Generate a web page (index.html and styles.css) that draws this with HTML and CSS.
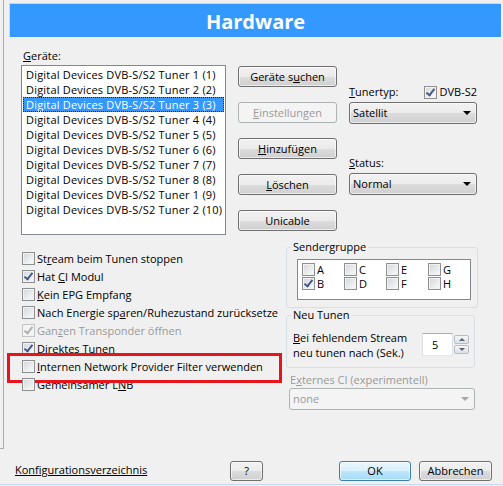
FILE: index.html
```html
<!DOCTYPE html>
<html lang="de">
<head>
  <meta charset="UTF-8" />
  <title>Hardware</title>
  <link rel="stylesheet" href="styles.css">
</head>
<body>
  <div class="dialog">
    <header class="title">Hardware</header>

    <div class="top">
      <div class="devices">
        <div class="label"><u>G</u>eräte:</div>
        <ul class="list">
          <li>Digital Devices DVB-S/S2 Tuner 1 (1)</li>
          <li>Digital Devices DVB-S/S2 Tuner 2 (2)</li>
          <li class="selected">Digital Devices DVB-S/S2 Tuner 3 (3)</li>
          <li>Digital Devices DVB-S/S2 Tuner 4 (4)</li>
          <li>Digital Devices DVB-S/S2 Tuner 5 (5)</li>
          <li>Digital Devices DVB-S/S2 Tuner 6 (6)</li>
          <li>Digital Devices DVB-S/S2 Tuner 7 (7)</li>
          <li>Digital Devices DVB-S/S2 Tuner 8 (8)</li>
          <li>Digital Devices DVB-S/S2 Tuner 1 (9)</li>
          <li>Digital Devices DVB-S/S2 Tuner 2 (10)</li>
        </ul>
      </div>

      <div class="actions">
        <button class="btn">Geräte s<u>u</u>chen</button>
        <button class="btn" disabled><u>E</u>instellungen</button>
        <button class="btn"><u>H</u>inzufügen</button>
        <button class="btn"><u>L</u>öschen</button>
        <button class="btn">Unicable</button>
      </div>

      <div class="tuner">
        <div class="tuner-head">
          <span><u>T</u>unertyp:</span>
          <span class="check"><span class="cb on"></span><span>DVB-S2</span></span>
        </div>
        <div class="combo">Satellit</div>
        <div class="field-label status"><u>S</u>tatus:</div>
        <div class="combo">Normal</div>
      </div>
    </div>

    <div class="bottom">
      <ul class="options">
        <li><span class="cb"></span><span>St<u>r</u>eam beim Tunen stoppen</span></li>
        <li><span class="cb on"></span><span>Hat <u>C</u>I Modul</span></li>
        <li><span class="cb"></span><span><u>K</u>ein EPG Empfang</span></li>
        <li><span class="cb"></span><span>Nach Energie sp<u>a</u>ren/Ruhezustand zurücksetze</span></li>
        <li class="off"><span class="cb on"></span><span>Gan<u>z</u>en Transponder öffnen</span></li>
        <li><span class="cb on"></span><span>Direktes Tunen</span></li>
        <li class="marked"><span class="cb"></span><span><u>I</u>nternen Network Provider Filter verwenden</span></li>
        <li><span class="cb"></span><span>Gemeinsamer L<u>N</u>B</span></li>
      </ul>

      <div class="groups">
        <fieldset class="group sender">
          <legend>Sendergruppe</legend>
          <div class="letters">
            <span class="check"><span class="cb"></span><span>A</span></span>
            <span class="check"><span class="cb"></span><span>C</span></span>
            <span class="check"><span class="cb"></span><span>E</span></span>
            <span class="check"><span class="cb"></span><span>G</span></span>
            <span class="check"><span class="cb on"></span><span>B</span></span>
            <span class="check"><span class="cb"></span><span>D</span></span>
            <span class="check"><span class="cb"></span><span>F</span></span>
            <span class="check"><span class="cb"></span><span>H</span></span>
          </div>
        </fieldset>

        <fieldset class="group retune">
          <legend>Neu Tunen</legend>
          <div class="retune-row">
            <p><u>B</u>ei fehlendem Stream<br>neu tunen nach (Sek.)</p>
            <div class="spin">
              <div class="spin-value">5</div>
              <div class="spin-btns">
                <span class="up"></span>
                <span class="down"></span>
              </div>
            </div>
          </div>
        </fieldset>

        <div class="field-label ext">E<u>x</u>ternes CI (experimentell)</div>
        <div class="combo disabled">none</div>
      </div>
    </div>

    <footer class="footer">
      <a class="link">Konfigurationsverzeichnis</a>
      <button class="btn help">?</button>
      <button class="btn default">OK</button>
      <button class="btn cancel">Abbrechen</button>
    </footer>
  </div>
</body>
</html>
```

FILE: styles.css
```css
* {
  margin: 0; padding: 0; box-sizing: border-box;
}

html, body {
  width: 503px;
  height: 486px;
  overflow: hidden;
  background: #f0f0f0;
  color: #000;
  font-family: "Open Sans", "Noto Sans", sans-serif;
  font-size: 11px;
}

/* rand des fensters dahinter */
body::before {
  content: "";
  position: absolute;
  left: 0; top: 0;
  width: 3px;
  height: 448px;
  border-right: 1px solid #adadad;
  border-bottom: 1px solid #adadad;
}

.dialog {
  height: 485px;
  padding: 3px 1px 3px 9px;
  display: flex;
  flex-direction: column;
  border-bottom: 1px solid #c9d9e8;
}

.title {
  height: 35px;
  background: #3399ff;
  border: 1px solid;
  border-color: #d4d4d4 #fff #fff #d4d4d4;
  color: #fff;
  font-size: 20px;
  font-weight: 700;
  text-align: center;
  line-height: 31px;
  padding-top: 2px;
}

/* obere zeile */
.top {
  display: flex;
  height: 185px;
  margin: 12px 0 0 12px;
}

.devices {
  width: 205px;
}

.label {
  line-height: 12px;
  padding-left: 2px;
}

.list {
  list-style: none;
  margin-top: 3px;
  height: 170px;
  padding: 1px;
  border: 1px solid #828790;
  background: #fff;
}

.list li {
  height: 15px;
  line-height: 15px;
  padding-left: 3px;
  white-space: nowrap;
  letter-spacing: 0.2px;
}

.list li.selected {
  background: #3399ff;
  color: #fff;
  outline: 1px dotted #222;
  outline-offset: -1px;
}

.actions {
  width: 99px;
  margin-left: 12px;
  padding-top: 16px;
  display: flex;
  flex-direction: column;
  gap: 15px;
}

.btn {
  height: 21px;
  border: 1px solid #707070;
  border-radius: 3px;
  background: linear-gradient(#f2f2f2 0%, #ebebeb 50%, #dddddd 50%, #cfcfcf 100%);
  box-shadow: inset 0 0 0 1px rgba(255, 255, 255, 0.6);
  font: inherit;
  color: #000;
  line-height: 19px;
  text-align: center;
}

.btn:disabled {
  border-color: #adb2b5;
  background: #f4f4f4;
  box-shadow: none;
  color: #9a9a9a;
}

.tuner {
  width: 128px;
  margin-left: 12px;
  padding-top: 35px;
}

.tuner-head {
  display: flex;
  justify-content: space-between;
  align-items: center;
  height: 14px;
  line-height: 14px;
}

.check {
  display: flex;
  align-items: center;
  white-space: nowrap;
}

.combo {
  position: relative;
  height: 22px;
  margin-top: 3px;
  padding-left: 3px;
  border: 1px solid #707070;
  border-radius: 3px;
  background: linear-gradient(#f2f2f2 0%, #ebebeb 50%, #dddddd 50%, #cfcfcf 100%);
  box-shadow: inset 0 0 0 1px rgba(255, 255, 255, 0.6);
  line-height: 20px;
}

.combo::after {
  content: "";
  position: absolute;
  right: 5px; top: 8px;
  border-left: 4px solid transparent;
  border-right: 4px solid transparent;
  border-top: 4px solid #000;
}

.combo.disabled {
  border-color: #adb2b5;
  background: #f4f4f4;
  box-shadow: none;
  color: #9a9a9a;
}

.combo.disabled::after {
  border-top-color: #a8a8a8;
}

.field-label {
  line-height: 14px;
}

.status {
  margin-top: 32px;
}

/* checkboxen */
.cb {
  position: relative;
  flex: none;
  width: 13px;
  height: 13px;
  margin-right: 2px;
  border: 1px solid #8e8f8f;
  background: linear-gradient(135deg, #d3d6da, #fbfbfb);
  box-shadow: inset 0 0 0 1px #f2f2f2;
}

.cb.on::after {
  content: "";
  position: absolute;
  left: 3px; top: 0;
  width: 3px;
  height: 7px;
  border: solid #47598c;
  border-width: 0 2px 2px 0;
  transform: rotate(38deg);
}

/* untere zeile */
.bottom {
  display: flex;
  margin-top: 5px;
}

.options {
  list-style: none;
  width: 261px;
  margin-left: 13px;
  padding-top: 9px;
}

.options li {
  display: flex;
  align-items: center;
  height: 18px;
  white-space: nowrap;
}

.options li.off {
  color: #9a9a9a;
}

.options li.off .cb {
  border-color: #c4c4c4;
  background: #f4f4f4;
}

.options li.off .cb::after {
  border-color: #b0b0b0;
}

.options li.marked {
  position: relative;
}

.options li.marked::after {
  content: "";
  position: absolute;
  left: -15px; top: -4px;
  width: 269px;
  height: 24px;
  border: 3px solid #e8141c;
}

.groups {
  width: 192px;
  margin-left: 3px;
}

.group {
  border: 1px solid #d5dfe5;
  border-radius: 3px;
  padding: 0 6px 7px 4px;
}

.group legend {
  padding: 0 2px;
  line-height: 14px;
}

.letters {
  display: grid;
  grid-template-columns: repeat(4, 42px);
  grid-auto-rows: 14px;
  width: 174px;
  height: 41px;
  margin: 5px 0 0 6px;
  padding: 2px 0 0 4px;
  border: 1px solid #828790;
  background: #fff;
}

.letters .cb {
  margin-right: 2px;
}

.retune {
  width: 189px;
  padding-right: 5px;
}

.retune-row {
  display: flex;
  margin-top: 8px;
}

.retune-row p {
  padding-left: 2px;
  line-height: 15px;
}

.spin {
  display: flex;
  gap: 1px;
  margin: 3px 0 0 auto;
}

.spin-value {
  width: 31px;
  height: 23px;
  padding-left: 9px;
  border: 1px solid #dbdfe6;
  border-top-color: #abadb3;
  border-bottom-color: #e3e9ef;
  background: #fff;
  line-height: 21px;
}

.spin-btns {
  display: flex;
  flex-direction: column;
  gap: 1px;
  margin-top: 2px;
}

.spin-btns span {
  display: flex;
  justify-content: center;
  align-items: center;
  width: 15px;
  height: 9px;
  border: 1px solid #b7bdc6;
  border-radius: 2px;
  background: linear-gradient(#f6f6f6, #dde1e6);
}

.spin-btns .up::after {
  content: "";
  border-left: 3px solid transparent;
  border-right: 3px solid transparent;
  border-bottom: 3px solid #56637a;
}

.spin-btns .down::after {
  content: "";
  border-left: 3px solid transparent;
  border-right: 3px solid transparent;
  border-top: 3px solid #56637a;
}

.ext {
  margin: 5px 0 0 4px;
  color: #9a9a9a;
}

.ext + .combo {
  width: 186px;
  margin: 1px 0 0 3px;
}

/* fusszeile */
.footer {
  display: flex;
  align-items: center;
  height: 20px;
  margin: auto 0 0 6px;
}

.footer .btn {
  height: 20px;
  line-height: 18px;
}

.link {
  flex: none;
  width: 215px;
  margin-bottom: 3px;
  text-decoration: underline;
}

.help {
  width: 33px;
}

.default {
  width: 72px;
  margin-left: 76px;
  border-color: #3c7fb1;
  background: linear-gradient(#eaf6fd 0%, #d9f0fc 50%, #bee6fd 50%, #a7d9f5 100%);
}

.cancel {
  width: 73px;
  margin-left: 8px;
}
```
